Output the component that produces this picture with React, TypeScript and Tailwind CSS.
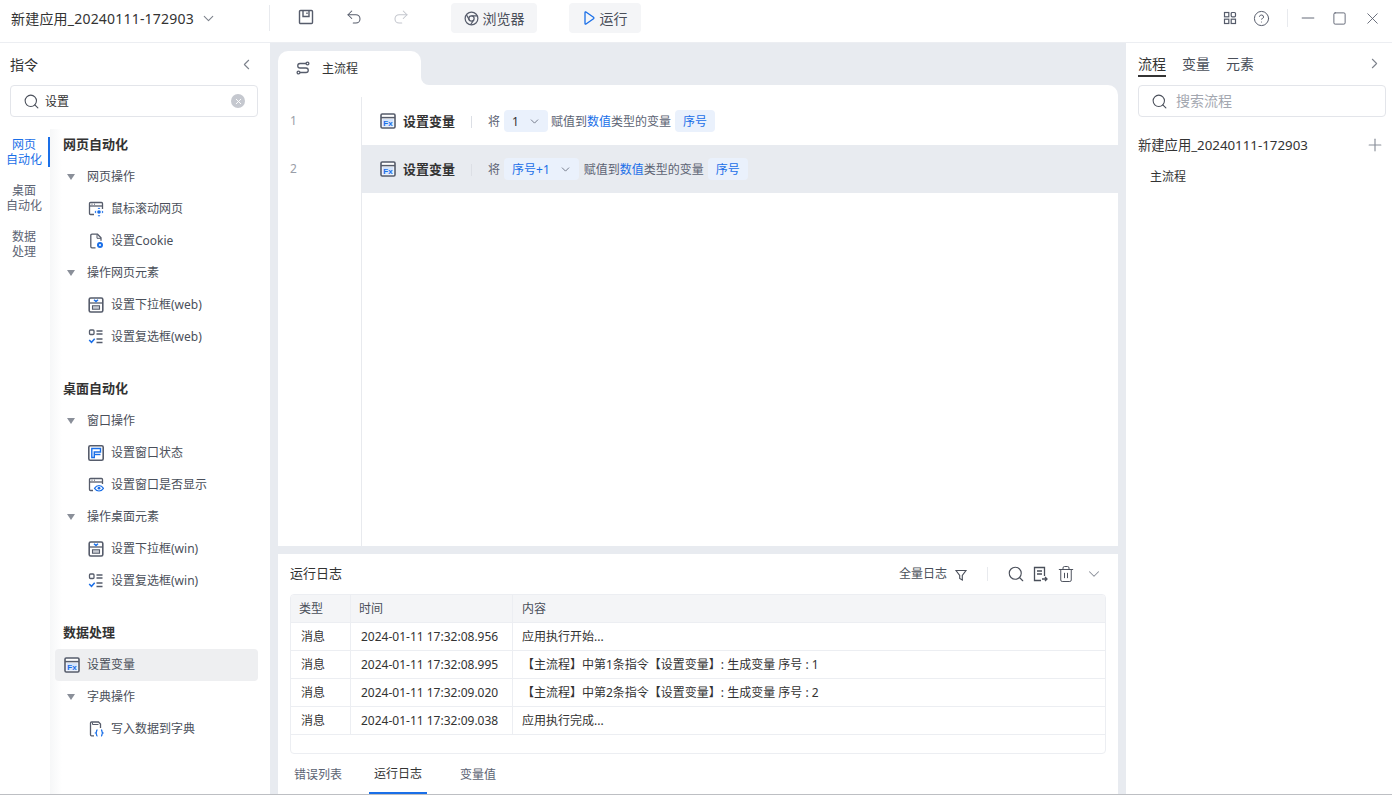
import type { ReactNode } from "react";
import {
  ChevronDown,
  ChevronLeft,
  ChevronRight,
  CircleHelp,
  Minus,
  Plus,
  Redo2,
  Search,
  Square,
  Trash2,
  Undo2,
  X,
} from "lucide-react";

const FONT = "font-['Noto_Sans','Noto_Sans_CJK_SC',sans-serif]";

const FxIcon = () => (
  <svg width="16" height="16" viewBox="0 0 16 16" fill="none">
    <rect x="1" y="1" width="14" height="14" rx="1.2" fill="#fff" stroke="#565c6b" strokeWidth="1.6" />
    <path d="M1 4.600h14" stroke="#565c6b" strokeWidth="1.5" />
    <rect x="2.500" y="6" width="11" height="7.500" fill="#d5e4fb" />
    <text x="8" y="12.700" textAnchor="middle" fontSize="8" fontWeight="700" fill="#1a6fe8" fontFamily="Liberation Sans">
      Fx
    </text>
  </svg>
);

const ScrollIcon = () => (
  <svg width="16" height="16" viewBox="0 0 16 16" fill="none">
    <path d="M6 13.500H2.500a1 1 0 0 1-1-1v-10a1 1 0 0 1 1-1h11a1 1 0 0 1 1 1V8" stroke="#565c6b" strokeWidth="1.300" />
    <path d="M1.500 5h13" stroke="#565c6b" strokeWidth="1.300" />
    <path d="M3.500 3.200h1M6 3.200h1" stroke="#565c6b" />
    <circle cx="11" cy="11" r="1.800" fill="#1a6fe8" />
    <path d="M11 6.500l1.400 1.600h-2.800zM11 15.800l1.400-1.600h-2.800zM6.500 11l1.600-1.400v2.800zM15.500 11l-1.600-1.400v2.800z" fill="#1a6fe8" />
  </svg>
);

const CookieIcon = () => (
  <svg width="16" height="16" viewBox="0 0 16 16" fill="none">
    <path d="M7.500 14.800H4a1.200 1.200 0 0 1-1.200-1.200V2.400A1.200 1.200 0 0 1 4 1.200h5.500L13 4.800v3" stroke="#565c6b" strokeWidth="1.300" />
    <path d="M9 1.500v3.800h4" stroke="#565c6b" strokeWidth="1" />
    <circle cx="12" cy="12" r="3" fill="#1a6fe8" />
    <circle cx="12" cy="12" r="1" fill="#fff" />
  </svg>
);

const DropdownIcon = () => (
  <svg width="16" height="16" viewBox="0 0 16 16" fill="none">
    <rect x="1.200" y="1" width="13.600" height="14" rx="1.500" stroke="#565c6b" strokeWidth="1.600" />
    <path d="M1.500 6h13" stroke="#565c6b" strokeWidth="1.300" />
    <path d="M4.500 8.800h7v3.400h-7z" fill="#c9ccd3" stroke="#565c6b" strokeWidth="1.100" />
    <path d="M6 2.800l2 1.800 2-1.800" stroke="#1a6fe8" strokeWidth="1.400" />
  </svg>
);

const CheckListIcon = () => (
  <svg width="16" height="16" viewBox="0 0 16 16" fill="none">
    <rect x="1.500" y="1" width="4.500" height="4.500" rx="1" stroke="#565c6b" strokeWidth="1.300" />
    <path d="M8.500 2h6M8.500 5h6M8.500 10h6M8.500 13.500h6" stroke="#565c6b" strokeWidth="1.300" />
    <path d="M1.200 11l2.300 2.300 3.200-3.500" stroke="#1a6fe8" strokeWidth="1.500" />
  </svg>
);

const WindowStateIcon = () => (
  <svg width="16" height="16" viewBox="0 0 16 16" fill="none">
    <rect x="0.800" y="0.800" width="14.400" height="14.400" rx="1.500" stroke="#565c6b" strokeWidth="1.600" />
    <path d="M3.800 3.500h8.700v3.500H6.300v5.500H3.800z" stroke="#1a6fe8" strokeWidth="1.400" />
    <path d="M6.300 9.500h6.200" stroke="#1a6fe8" strokeWidth="1.400" />
  </svg>
);

const WindowEyeIcon = () => (
  <svg width="16" height="16" viewBox="0 0 16 16" fill="none">
    <path d="M5 13.500H2.500a1 1 0 0 1-1-1v-10a1 1 0 0 1 1-1h11a1 1 0 0 1 1 1V7" stroke="#565c6b" strokeWidth="1.300" />
    <path d="M1.500 5h13" stroke="#565c6b" strokeWidth="1.300" />
    <path d="M3.500 3.200h1M6 3.200h1" stroke="#565c6b" />
    <path d="M6.500 11.300C8 9 10 8.500 11 8.500s3 .5 4.500 2.800C14 13.500 12 14 11 14s-3-.5-4.500-2.700z" stroke="#1a6fe8" strokeWidth="1.200" />
    <circle cx="11" cy="11.200" r="1.400" fill="#1a6fe8" />
  </svg>
);

const DictIcon = () => (
  <svg width="16" height="16" viewBox="0 0 16 16" fill="none">
    <path d="M6 14.800H3.500a1 1 0 0 1-1-1V2a1 1 0 0 1 1-1h7l2 2v4" stroke="#565c6b" strokeWidth="1.300" />
    <path d="M4.500 1.500v2h6" stroke="#565c6b" strokeWidth="1" />
    <path d="M9.500 9c-1 0-1 .6-1 1.500s-.2 1.200-.8 1.500c.6.3.8.6.8 1.500s0 1.500 1 1.500M13 9c1 0 1 .6 1 1.500s.2 1.200.8 1.500c-.6.3-.8.6-.8 1.500s0 1.500-1 1.500" stroke="#1a6fe8" strokeWidth="1.300" />
  </svg>
);

const FlowIcon = () => (
  <svg width="14" height="14" viewBox="0 0 14 14" fill="none" stroke="#565c6b" strokeWidth="1.300">
    <circle cx="11.500" cy="2.500" r="1.400" />
    <circle cx="2.500" cy="11.500" r="1.400" />
    <path d="M10 2.500H4a2.200 2.200 0 0 0 0 4.500h6a2.200 2.200 0 0 1 0 4.500H4" />
  </svg>
);

const Caret = () => (
  <span className="w-0 h-0 border-l-[4.5px] border-r-[4.5px] border-t-[6px] border-l-transparent border-r-transparent border-t-[#8a8f99]" />
);

const Group = ({ label }: { label: string }) => (
  <div className="h-8 flex items-center pl-[17px] text-xs text-[#4a4f5a]">
    <Caret />
    <span className="ml-[12px]">{label}</span>
  </div>
);

const Item = ({ icon, label }: { icon: ReactNode; label: string }) => (
  <div className="h-8 flex items-center pl-[38px] text-xs text-[#4a4f5a]">
    {icon}
    <span className="ml-[7px]">{label}</span>
  </div>
);

const Heading = ({ label, className }: { label: string; className?: string }) => (
  <div className={`h-[31px] pb-[2px] flex items-center pl-[13px] text-[13px] font-bold text-[#333] ${className ?? ""}`}>
    {label}
  </div>
);

const SideTab = ({ label, second, active }: { label: string; second: string; active?: boolean }) => (
  <div
    className={`h-[30px] w-[50px] flex flex-col items-center justify-center text-xs leading-[15px] border-r-2 ${
      active ? "text-[#1a6fe8] border-[#1a6fe8]" : "text-[#5c6373] border-transparent"
    }`}
  >
    <span>{label}</span>
    <span>{second}</span>
  </div>
);

const SearchBox = ({ value, placeholder, clear }: { value?: string; placeholder?: string; clear?: boolean }) => (
  <div className="h-8 rounded border border-[#e3e5ea] flex items-center pl-[12px] pr-[12px] text-xs">
    <Search size={17} strokeWidth={1.5} className="text-[#4a4f5a]" />
    <span className={`flex-1 ${value ? "ml-[5px] pt-[2px] text-[#333]" : "ml-2 text-[#a3a7b0] text-[14px]"}`}>
      {value ?? placeholder}
    </span>
    {clear && (
      <span className="w-[14px] h-[14px] rounded-full bg-[#c5c8cf] flex items-center justify-center">
        <X size={9} strokeWidth={2.5} className="text-white" />
      </span>
    )}
  </div>
);

const Pill = ({ children, caret, dark }: { children: ReactNode; caret?: boolean; dark?: boolean }) => (
  <span
    className={`-mt-[2px] h-[22px] pl-2 pt-[2px] rounded bg-[#eaf1fc] flex items-center ${caret ? "pr-[7px]" : "pr-2"} ${
      dark ? "text-[#333]" : "text-[#1a6fe8]"
    }`}
  >
    {children}
    {caret && <ChevronDown size={13} strokeWidth={1.5} className="-mt-[2px] ml-[9px] text-[#5c6373]" />}
  </span>
);

const StepRow = ({ value, valueDark, highlight }: { value: string; valueDark?: boolean; highlight?: boolean }) => (
  <div className={`h-12 flex items-center pl-[18px] pt-[2px] text-xs ${highlight ? "bg-[#e8ebf0]" : ""}`}>
    <span className="-mt-[2px] flex">
      <FxIcon />
    </span>
    <span className="ml-[7px] text-[13px] font-bold text-[#333]">设置变量</span>
    <span className="w-px h-3 bg-[#dcdfe5] ml-4 mr-4" />
    <span className="text-[#5c6373]">将</span>
    <span className="ml-1 flex">
      <Pill caret dark={valueDark}>
        {value}
      </Pill>
    </span>
    <span className={`text-[#5c6373] ${highlight ? "ml-[5px]" : "ml-[3px]"}`}>
      赋值到<span className="text-[#1a6fe8]">数值</span>类型的变量
    </span>
    <span className="ml-1 flex">
      <Pill>序号</Pill>
    </span>
  </div>
);

const logs = [
  ["2024-01-11 17:32:08.956", "应用执行开始..."],
  ["2024-01-11 17:32:08.995", "【主流程】中第1条指令【设置变量】: 生成变量 序号 : 1"],
  ["2024-01-11 17:32:09.020", "【主流程】中第2条指令【设置变量】: 生成变量 序号 : 2"],
  ["2024-01-11 17:32:09.038", "应用执行完成..."],
];

export default function App() {
  return (
    <div className={`h-screen overflow-hidden flex flex-col bg-[#e8ebf0] text-[#333] ${FONT}`}>
      {/* top bar */}
      <header className="h-[43px] shrink-0 bg-white border-b border-[#eceef2] pb-[6px] flex items-center">
        <div className="w-[270px] h-[26px] border-r border-[#e8eaee] flex items-center pl-[11px]">
          <span className="text-[14px] tracking-[0.2px] text-[#333]">新建应用_20240111-172903</span>
          <ChevronDown size={17} strokeWidth={1.5} className="ml-[6px] text-[#7d828c]" />
        </div>
        <svg width="16" height="16" viewBox="0 0 16 16" fill="none" stroke="#565c6b" strokeWidth="1.400" className="ml-[28px] -mt-[2px]">
          <rect x="1.500" y="1.500" width="13" height="13" rx="1" />
          <path d="M5 1.500v6h6v-6M9 3.500v1.500" />
        </svg>
        <Undo2 size={18} strokeWidth={1.4} className="ml-[31px] -mt-[2px] text-[#565c6b]" />
        <Redo2 size={18} strokeWidth={1.4} className="ml-[29px] -mt-[2px] text-[#c3c6cd]" />
        <div className="ml-[41px] w-[86px] h-[30px] rounded bg-[#f4f5f7] flex items-center justify-center text-[14px] text-[#4a4f5a]">
          <svg width="15" height="15" viewBox="0 0 16 16" fill="none" stroke="#565c6b" strokeWidth="1.300" className="mr-1">
            <circle cx="8" cy="8" r="6.800" />
            <circle cx="8" cy="8" r="2.800" />
            <path d="M8 5.200h6.200M5.600 9.500L2.600 4M10.400 9.500L7 14.700" />
          </svg>
          浏览器
        </div>
        <div className="ml-[32px] w-[72px] h-[30px] rounded bg-[#f4f5f7] flex items-center justify-center text-[14px] text-[#4a4f5a]">
          <svg width="12" height="14" viewBox="0 0 12 14" fill="none" stroke="#1a6fe8" strokeWidth="1.300" className="mr-[5px]">
            <path d="M2 1.500c0-.6.5-.8 1-.5l7.500 5.300c.5.400.5 1 0 1.400L3 13c-.5.300-1 .1-1-.5z" />
          </svg>
          运行
        </div>
        <div className="ml-auto flex items-center text-[#565c6b]">
          <svg width="14" height="14" viewBox="0 0 14 14" fill="none" stroke="currentColor" strokeWidth="1.200">
            <rect x="1.500" y="1.500" width="4.300" height="4.300" />
            <rect x="8.200" y="1.500" width="4.300" height="4.300" rx="1" />
            <rect x="1.500" y="8.200" width="4.300" height="4.300" />
            <rect x="8.200" y="8.200" width="4.300" height="4.300" />
          </svg>
          <CircleHelp size={17} strokeWidth={1.4} className="ml-[16px]" />
          <span className="w-px h-[18px] bg-[#e8eaee] ml-[17px]" />
          <Minus size={20} strokeWidth={1.1} className="ml-[10px]" />
          <Square size={15} strokeWidth={1.4} className="ml-[14px]" />
          <X size={19} strokeWidth={1.1} className="ml-[16px] mr-[10px]" />
        </div>
      </header>

      <div className="flex-1 min-h-0 flex">
        {/* commands */}
        <aside className="w-[270px] shrink-0 bg-white flex flex-col overflow-hidden">
          <div className="h-[42px] flex items-center justify-between pl-[10px] pr-[15px] text-[14px] text-[#333]">
            指令
            <ChevronLeft size={17} strokeWidth={1.5} className="text-[#7d828c]" />
          </div>
          <div className="pl-[10px] pr-3">
            <SearchBox value="设置" clear />
          </div>
          <div className="flex-1 min-h-0 flex mt-3">
            <div className="w-[50px] shrink-0 pt-2 flex flex-col gap-4">
              <SideTab label="网页" second="自动化" active />
              <SideTab label="桌面" second="自动化" />
              <SideTab label="数据" second="处理" />
            </div>
            <div className="flex-1 pt-px pr-3 bg-gradient-to-r from-[#f6f7f8] to-white to-[12px] overflow-hidden">
              <Heading label="网页自动化" />
              <Group label="网页操作" />
              <Item icon={<ScrollIcon />} label="鼠标滚动网页" />
              <Item icon={<CookieIcon />} label="设置Cookie" />
              <Group label="操作网页元素" />
              <Item icon={<DropdownIcon />} label="设置下拉框(web)" />
              <Item icon={<CheckListIcon />} label="设置复选框(web)" />
              <Heading label="桌面自动化" className="mt-[21px]" />
              <Group label="窗口操作" />
              <Item icon={<WindowStateIcon />} label="设置窗口状态" />
              <Item icon={<WindowEyeIcon />} label="设置窗口是否显示" />
              <Group label="操作桌面元素" />
              <Item icon={<DropdownIcon />} label="设置下拉框(win)" />
              <Item icon={<CheckListIcon />} label="设置复选框(win)" />
              <Heading label="数据处理" className="mt-[21px] h-8" />
              <div className="h-8 ml-[5px] rounded bg-[#eeeff1] flex items-center pl-[9px] text-xs text-[#4a4f5a]">
                <FxIcon />
                <span className="ml-[7px]">设置变量</span>
              </div>
              <Group label="字典操作" />
              <Item icon={<DictIcon />} label="写入数据到字典" />
            </div>
          </div>
        </aside>

        {/* flow + log */}
        <main className="flex-1 min-w-0 flex flex-col pl-2 pr-2 pt-2 gap-2">
          <div className="flex-1 min-h-0 flex flex-col">
            <div className="h-[34px] flex shrink-0">
              <div className="w-[143px] bg-white rounded-t-[10px] flex items-center pl-[18px] pt-[2px] text-xs text-[#333]">
                <span className="-mt-[2px] flex">
                  <FlowIcon />
                </span>
                <span className="ml-[12px]">主流程</span>
              </div>
              <div className="flex-1 bg-white">
                <div className="h-full bg-[#e8ebf0] rounded-bl-[8px]" />
              </div>
            </div>
            <div className="flex-1 bg-white rounded-tr-[10px] pt-3 flex">
              <div className="w-[84px] border-r border-[#e8eaee] shrink-0 text-xs text-[#9a9ea8] pl-3">
                <div className="h-12 flex items-center">1</div>
                <div className="h-12 flex items-center">2</div>
              </div>
              <div className="flex-1 min-w-0">
                <StepRow value="1" valueDark />
                <StepRow value="序号+1" highlight />
              </div>
            </div>
          </div>

          <section className="h-[240px] shrink-0 bg-white px-3 flex flex-col">
            <div className="h-10 shrink-0 flex items-center text-[#4a4f5a]">
              <span className="text-[13px] text-[#333]">运行日志</span>
              <span className="ml-auto text-xs">全量日志</span>
              <svg width="14" height="14" viewBox="0 0 14 14" fill="none" stroke="currentColor" strokeWidth="1.100" className="ml-[7px] mt-px">
                <path d="M2 2.500h10L8.300 7.500v4.500l-2.600-1.500v-3z" />
              </svg>
              <span className="w-px h-[14px] bg-[#e8eaee] ml-[19px]" />
              <Search size={18} strokeWidth={1.5} className="ml-[19px]" />
              <svg width="16" height="16" viewBox="0 0 16 16" fill="none" stroke="currentColor" strokeWidth="1.300" className="ml-[7px]">
                <path d="M9 14.500H2.500v-13h10V10M5 5h5M5 8h5" />
                <path d="M10 13h5M13 11l2 2-2 2" />
              </svg>
              <Trash2 size={18} strokeWidth={1.3} className="ml-[9px]" />
              <ChevronDown size={18} strokeWidth={1.4} className="ml-[10px] mr-[3px] text-[#8a8f99]" />
            </div>
            <div className="h-[160px] shrink-0 rounded border border-[#eceef2] text-xs overflow-hidden">
              <div className="h-7 flex bg-[#f4f5f7] border-b border-[#eceef2] items-stretch text-[#4a4f5a]">
                <div className="w-[60px] pl-2 border-r border-[#eceef2] flex items-center">类型</div>
                <div className="w-[162px] pl-2 border-r border-[#eceef2] flex items-center">时间</div>
                <div className="flex-1 pl-[9px] flex items-center">内容</div>
              </div>
              {logs.map(([time, text]) => (
                <div key={time} className="h-7 flex border-b border-[#eceef2] items-stretch text-[#333]">
                  <div className="w-[60px] pl-[10px] border-r border-[#eceef2] flex items-center">消息</div>
                  <div className="w-[162px] pl-[10px] border-r border-[#eceef2] flex items-center">{time}</div>
                  <div className="flex-1 pl-[9px] flex items-center">{text}</div>
                </div>
              ))}
            </div>
            <div className="flex-1 flex text-xs text-[#5c6373]">
              <div className="w-[79px] pl-1 pt-[2px] flex items-center">错误列表</div>
              <div className="w-[58px] pt-[2px] flex items-center justify-center text-[#333] border-b-2 border-[#1a6fe8]">运行日志</div>
              <div className="ml-[33px] pt-[2px] flex items-center">变量值</div>
            </div>
          </section>
        </main>

        {/* right panel */}
        <aside className="w-[266px] shrink-0 bg-white pl-3 pr-[6px] flex flex-col">
          <div className="h-[42px] pb-[2px] shrink-0 flex items-center text-[14px] text-[#4a4f5a]">
            <div className="relative h-full flex items-center text-[#333]">
              流程
              <span className="absolute left-0 right-0 top-[32px] h-[2px] bg-[#333]" />
            </div>
            <span className="ml-4">变量</span>
            <span className="ml-4">元素</span>
            <ChevronRight size={17} strokeWidth={1.5} className="ml-auto mr-[3px] text-[#7d828c]" />
          </div>
          <SearchBox placeholder="搜索流程" />
          <div className="h-[56px] pt-[2px] flex items-center justify-between text-[13.3px] text-[#333]">
            新建应用_20240111-172903
            <Plus size={20} strokeWidth={1.4} className="-mt-[2px] mr-px text-[#8a8f99]" />
          </div>
          <div className="pl-3 text-xs text-[#333] -mt-[4px]">主流程</div>
        </aside>
      </div>
      <div className="h-px shrink-0 bg-[#bdbfc3]" />
    </div>
  );
}
